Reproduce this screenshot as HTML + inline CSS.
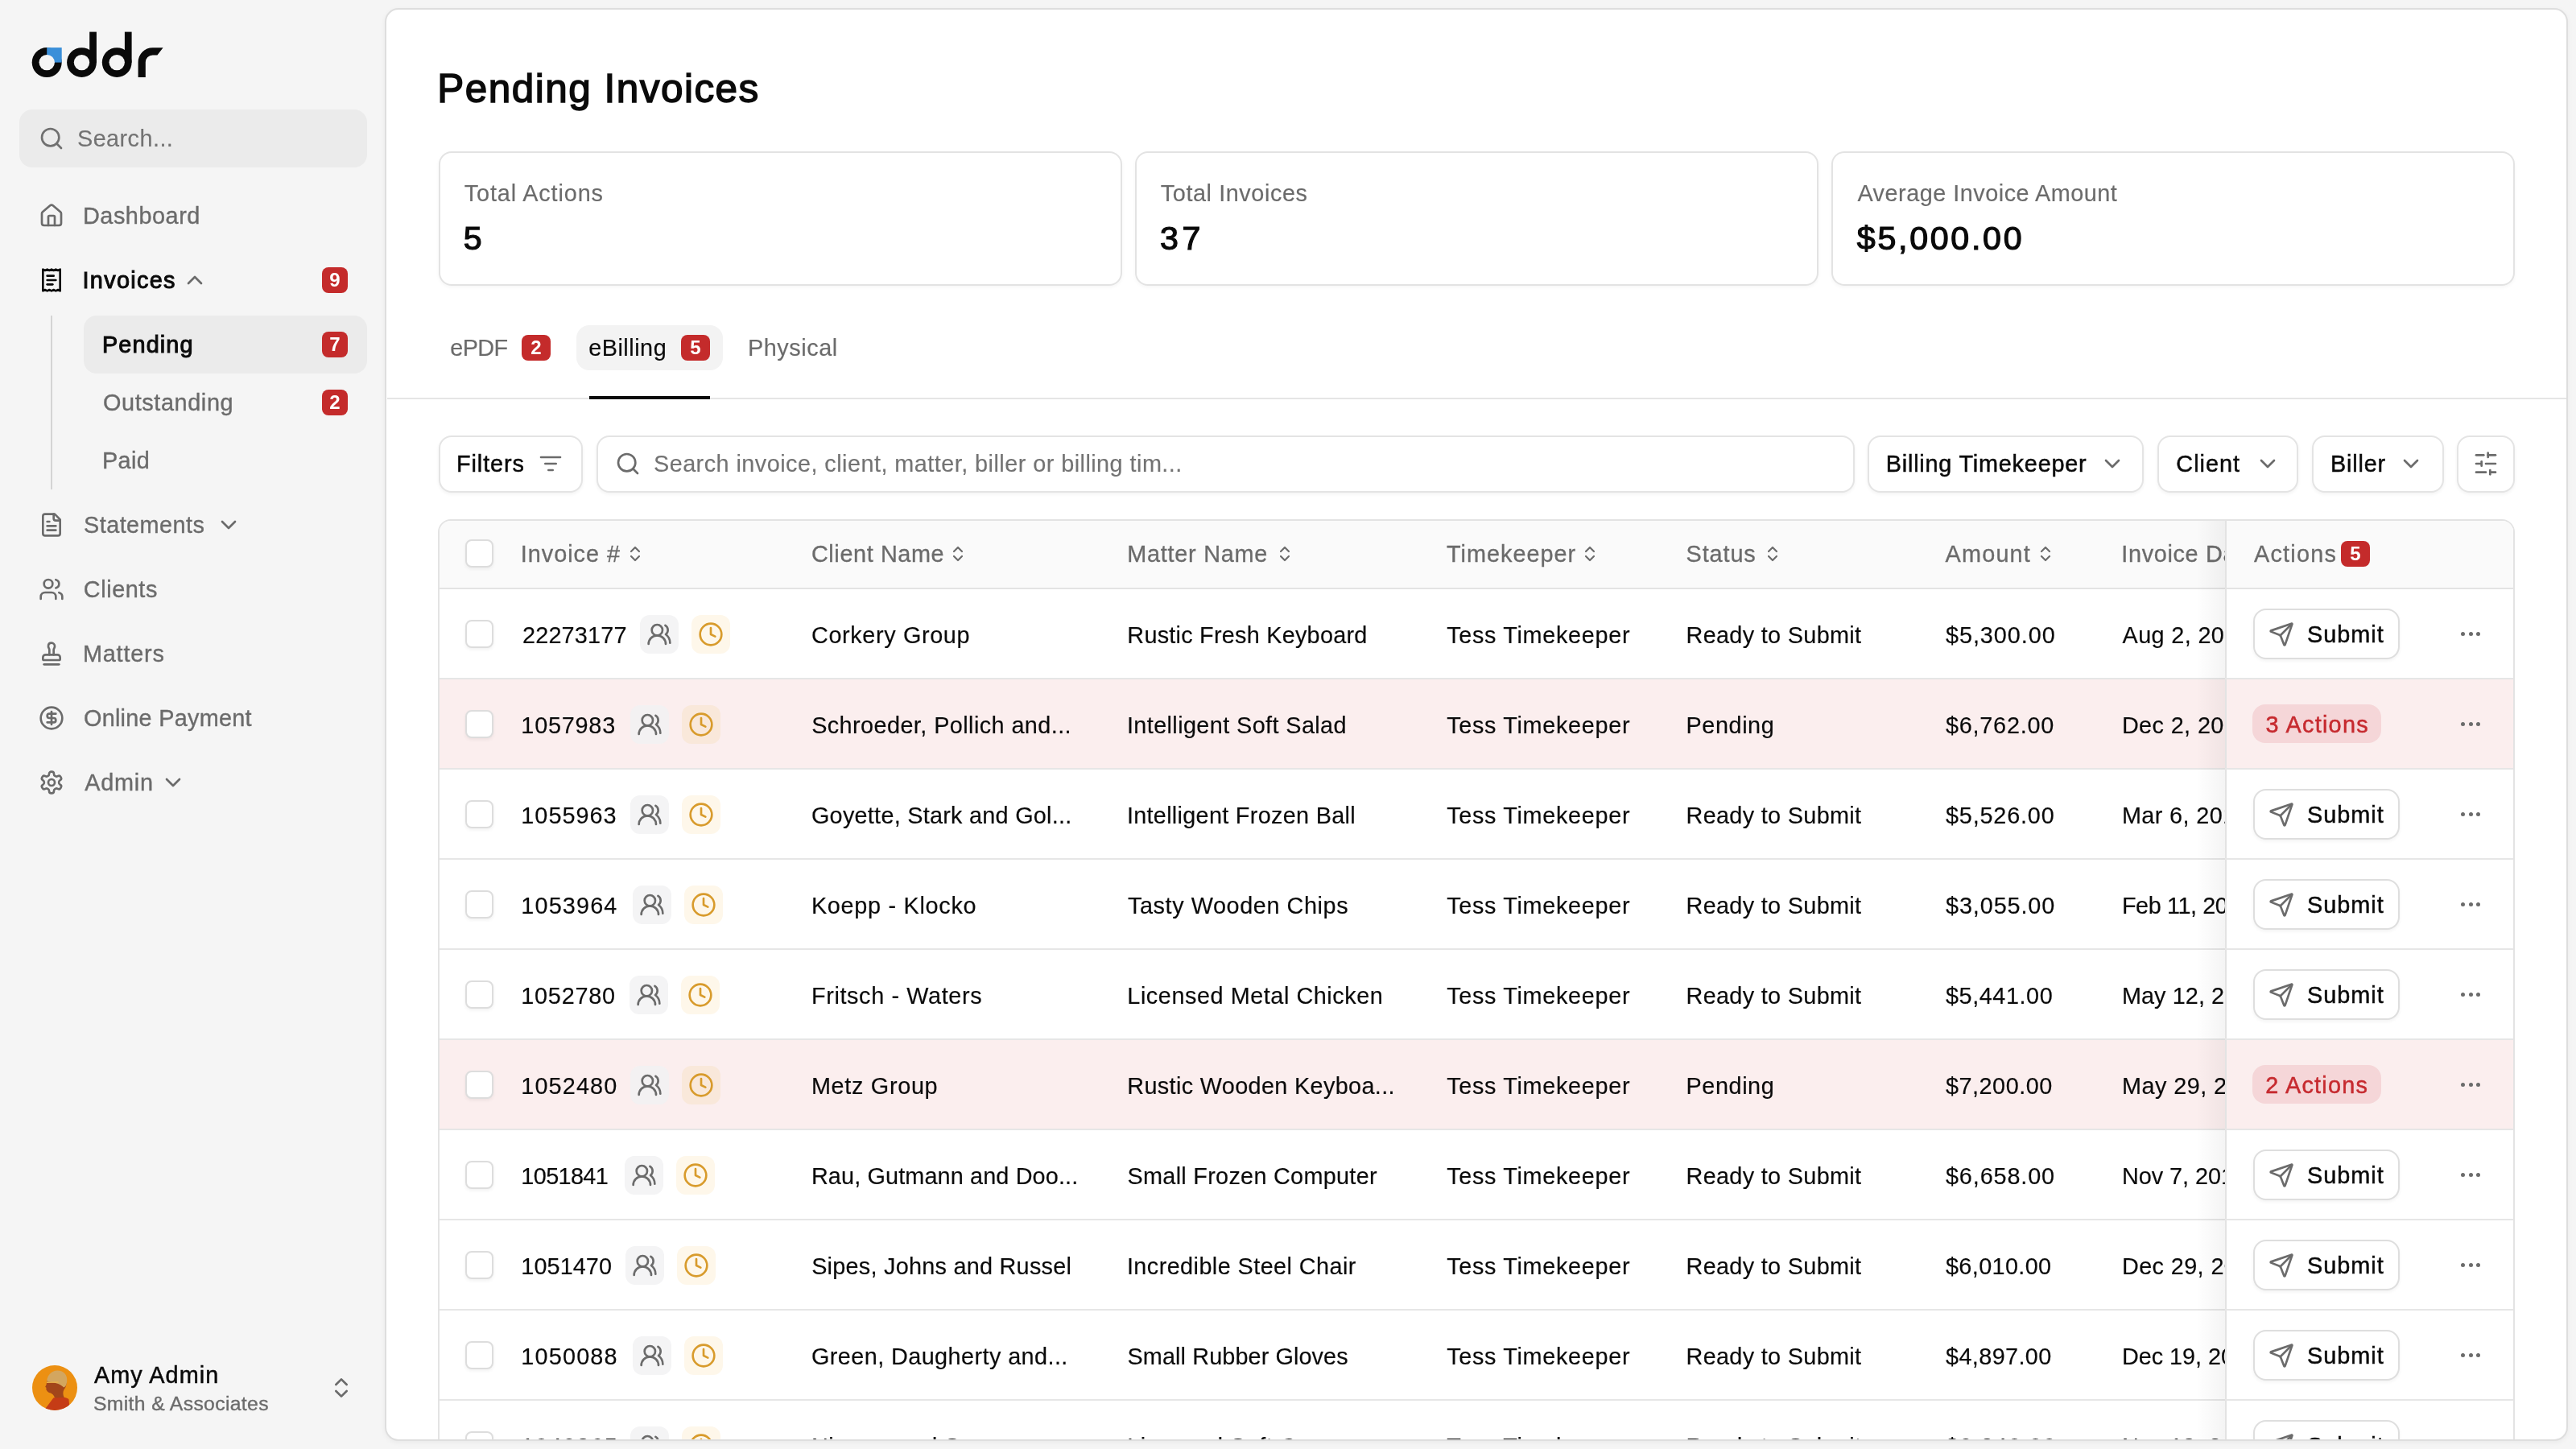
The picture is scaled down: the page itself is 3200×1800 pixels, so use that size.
<!DOCTYPE html>
<html><head><meta charset="utf-8"><title>Pending Invoices</title>
<style>
*{margin:0;padding:0;box-sizing:border-box}
html,body{width:100%;height:100%;overflow:hidden;background:#f5f5f5}
#app{will-change:transform;position:absolute;left:0;top:0;width:1600px;height:900px;zoom:2;font-family:"Liberation Sans",sans-serif;color:#0a0a0a;overflow:hidden;background:#f5f5f5}
.ic{position:absolute;overflow:visible}
.t{position:absolute;white-space:nowrap;line-height:20px;font-size:14px;-webkit-text-stroke:0.08px currentColor}
.gray{color:#6b6b6b}
.gray2{color:#737373}
.red{color:#c62a2f}
.b{position:absolute}
.dark{color:#0a0a0a}
.bold{font-weight:bold}
.t.med{-webkit-text-stroke:0.24px currentColor}
#sb .t.gray{-webkit-text-stroke:0.18px currentColor}
.t.hd.med{-webkit-text-stroke:0.16px currentColor}
.t.bold{-webkit-text-stroke:0}
.t.semi.s14{-webkit-text-stroke:0.5px currentColor}
.t.semi.s20{-webkit-text-stroke:0.62px currentColor}
.t.semi.s24{-webkit-text-stroke:0.75px currentColor}
.bdg{position:absolute;background:#c42b2b;color:#fff;border-radius:4px;text-align:center;font-weight:bold}
#sb{position:absolute;left:0;top:0;width:240px;height:900px}
.sbsearch{position:absolute;left:12px;top:68px;width:216px;height:36px;border-radius:8px;background:#ebebeb}
.nav{position:absolute;height:36px;border-radius:8px}
.nav.act{background:#ebebeb}
.subline{position:absolute;left:31.5px;top:196px;width:1px;height:108px;background:#d4d4d4}
@media (max-width:2400px){#app{zoom:1}}
#main{position:absolute;left:239px;top:5px;width:1356px;height:890px;background:#fff;border:1px solid #dedede;border-radius:8.5px;overflow:hidden;box-shadow:0 1px 3px rgba(0,0,0,0.05)}
</style></head>
<body><div id="app">
<div id="sb">
<svg class="ic" style="left:0;top:0;width:120px;height:60px" viewBox="0 0 120 60">
<circle cx="29.1" cy="38.8" r="9.25" fill="#0a0a0a"/>
<rect x="29.1" y="29.55" width="9.25" height="9.25" fill="#3a8fd9"/>
<circle cx="29.1" cy="38.8" r="4.85" fill="#f5f5f5"/>
<circle cx="50.75" cy="38.8" r="9.2" fill="#0a0a0a"/>
<rect x="55.6" y="19.8" width="4.35" height="19" fill="#0a0a0a"/>
<circle cx="50.75" cy="38.8" r="4.85" fill="#f5f5f5"/>
<circle cx="72.6" cy="38.8" r="9.2" fill="#0a0a0a"/>
<rect x="77.45" y="19.8" width="4.35" height="19" fill="#0a0a0a"/>
<circle cx="72.6" cy="38.8" r="4.85" fill="#f5f5f5"/>
<path d="M85.8,48 V38.6 A9 9 0 0 1 94.8,29.6 H101.3 L97.7,34.2 H94.8 A4.4 4.4 0 0 0 90.4,38.6 V48 Z" fill="#0a0a0a"/>
</svg>
<div class="sbsearch"></div>
<svg class="ic" style="left:24px;top:78px;width:16px;height:16px;" viewBox="0 0 24 24" fill="none" stroke="#707070" stroke-width="2" stroke-linecap="round" stroke-linejoin="round"><circle cx="11" cy="11" r="8"/><path d="m21 21-4.3-4.3"/></svg>
<div class="t gray2" style="left:47.98px;top:76.03px;font-size:14.42px;line-height:20px;letter-spacing:0.222px;">Search...</div>
<div class="nav" style="left:12px;top:116px;width:216px"></div>
<svg class="ic" style="left:24px;top:126px;width:16px;height:16px;" viewBox="0 0 24 24" fill="none" stroke="#6b6b6b" stroke-width="2" stroke-linecap="round" stroke-linejoin="round"><path d="M15 21v-8a1 1 0 0 0-1-1h-4a1 1 0 0 0-1 1v8"/><path d="M3 10a2 2 0 0 1 .709-1.528l7-5.999a2 2 0 0 1 2.582 0l7 5.999A2 2 0 0 1 21 10v9a2 2 0 0 1-2 2H5a2 2 0 0 1-2-2z"/></svg>
<div class="t gray" style="left:51.47px;top:124.23px;font-size:14.42px;line-height:20px;letter-spacing:0.276px;">Dashboard</div>
<div class="nav" style="left:12px;top:156px;width:216px"></div>
<svg class="ic" style="left:24px;top:166px;width:16px;height:16px;" viewBox="0 0 24 24" fill="none" stroke="#0a0a0a" stroke-width="2" stroke-linecap="round" stroke-linejoin="round"><path d="M4 2v20l2-1 2 1 2-1 2 1 2-1 2 1 2-1 2 1V2l-2 1-2-1-2 1-2-1-2 1-2-1-2 1Z"/><path d="M14 8H8"/><path d="M16 12H8"/><path d="M13 16H8"/></svg>
<div class="t semi s14 dark" style="left:51.26px;top:164.23px;font-size:14.42px;line-height:20px;letter-spacing:0.659px;">Invoices</div>
<svg class="ic" style="left:113px;top:166px;width:16px;height:16px;" viewBox="0 0 24 24" fill="none" stroke="#6b6b6b" stroke-width="2" stroke-linecap="round" stroke-linejoin="round"><path d="m18 15-6-6-6 6"/></svg>
<div class="bdg" style="left:200px;top:166px;width:16px;height:16px;font-size:12px;line-height:16px">9</div>
<div class="subline"></div>
<div class="nav act" style="left:52px;top:196px;width:176px"></div>
<div class="t semi s14 dark" style="left:63.47px;top:204.23px;font-size:14.42px;line-height:20px;letter-spacing:0.570px;">Pending</div>
<div class="bdg" style="left:200px;top:206px;width:16px;height:16px;font-size:12px;line-height:16px">7</div>
<div class="nav" style="left:52px;top:232px;width:176px"></div>
<div class="t gray" style="left:63.98px;top:240.23px;font-size:14.42px;line-height:20px;letter-spacing:0.308px;">Outstanding</div>
<div class="bdg" style="left:200px;top:242px;width:16px;height:16px;font-size:12px;line-height:16px">2</div>
<div class="nav" style="left:52px;top:268px;width:176px"></div>
<div class="t gray" style="left:63.47px;top:276.23px;font-size:14.42px;line-height:20px;letter-spacing:0.173px;">Paid</div>
<div class="nav" style="left:12px;top:308px;width:216px"></div>
<svg class="ic" style="left:24px;top:318px;width:16px;height:16px;" viewBox="0 0 24 24" fill="none" stroke="#6b6b6b" stroke-width="2" stroke-linecap="round" stroke-linejoin="round"><path d="M15 2H6a2 2 0 0 0-2 2v16a2 2 0 0 0 2 2h12a2 2 0 0 0 2-2V7Z"/><path d="M14 2v4a2 2 0 0 0 2 2h4"/><path d="M10 9H8"/><path d="M16 13H8"/><path d="M16 17H8"/></svg>
<div class="t gray" style="left:51.98px;top:316.23px;font-size:14.42px;line-height:20px;letter-spacing:0.234px;">Statements</div>
<svg class="ic" style="left:134px;top:318px;width:16px;height:16px;" viewBox="0 0 24 24" fill="none" stroke="#6b6b6b" stroke-width="2" stroke-linecap="round" stroke-linejoin="round"><path d="m6 9 6 6 6-6"/></svg>
<div class="nav" style="left:12px;top:348px;width:216px"></div>
<svg class="ic" style="left:24px;top:358px;width:16px;height:16px;" viewBox="0 0 24 24" fill="none" stroke="#6b6b6b" stroke-width="2" stroke-linecap="round" stroke-linejoin="round"><path d="M16 21v-2a4 4 0 0 0-4-4H6a4 4 0 0 0-4 4v2"/><circle cx="9" cy="7" r="4"/><path d="M22 21v-2a4 4 0 0 0-3-3.87"/><path d="M16 3.13a4 4 0 0 1 0 7.75"/></svg>
<div class="t gray" style="left:51.88px;top:356.23px;font-size:14.42px;line-height:20px;letter-spacing:0.292px;">Clients</div>
<div class="nav" style="left:12px;top:388px;width:216px"></div>
<svg class="ic" style="left:24px;top:398px;width:16px;height:16px;" viewBox="0 0 24 24" fill="none" stroke="#6b6b6b" stroke-width="2" stroke-linecap="round" stroke-linejoin="round"><path d="M5 22h14"/><path d="M19.27 13.73A2.5 2.5 0 0 0 17.5 13h-11A2.5 2.5 0 0 0 4 15.5V17a1 1 0 0 0 1 1h14a1 1 0 0 0 1-1v-1.5c0-.66-.26-1.3-.73-1.77Z"/><path d="M14 13V8.5C14 7 15 7 15 5a3 3 0 0 0-3-3c-1.66 0-3 1-3 3s1 2 1 3.5V13"/></svg>
<div class="t gray" style="left:51.47px;top:396.23px;font-size:14.42px;line-height:20px;letter-spacing:0.408px;">Matters</div>
<div class="nav" style="left:12px;top:428px;width:216px"></div>
<svg class="ic" style="left:24px;top:438px;width:16px;height:16px;" viewBox="0 0 24 24" fill="none" stroke="#6b6b6b" stroke-width="2" stroke-linecap="round" stroke-linejoin="round"><circle cx="12" cy="12" r="10"/><path d="M16 8h-6a2 2 0 1 0 0 4h4a2 2 0 1 1 0 4H8"/><path d="M12 18V6"/></svg>
<div class="t gray" style="left:51.98px;top:436.23px;font-size:14.42px;line-height:20px;letter-spacing:0.133px;">Online Payment</div>
<div class="nav" style="left:12px;top:468px;width:216px"></div>
<svg class="ic" style="left:24px;top:478px;width:16px;height:16px;" viewBox="0 0 24 24" fill="none" stroke="#6b6b6b" stroke-width="2" stroke-linecap="round" stroke-linejoin="round"><path d="M12.22 2h-.44a2 2 0 0 0-2 2v.18a2 2 0 0 1-1 1.73l-.43.25a2 2 0 0 1-2 0l-.15-.08a2 2 0 0 0-2.73.73l-.22.38a2 2 0 0 0 .73 2.73l.15.1a2 2 0 0 1 1 1.72v.51a2 2 0 0 1-1 1.74l-.15.09a2 2 0 0 0-.73 2.73l.22.38a2 2 0 0 0 2.73.73l.15-.08a2 2 0 0 1 2 0l.43.25a2 2 0 0 1 1 1.73V20a2 2 0 0 0 2 2h.44a2 2 0 0 0 2-2v-.18a2 2 0 0 1 1-1.73l.43-.25a2 2 0 0 1 2 0l.15.08a2 2 0 0 0 2.73-.73l.22-.39a2 2 0 0 0-.73-2.73l-.15-.08a2 2 0 0 1-1-1.74v-.5a2 2 0 0 1 1-1.74l.15-.09a2 2 0 0 0 .73-2.73l-.22-.38a2 2 0 0 0-2.73-.73l-.15.08a2 2 0 0 1-2 0l-.43-.25a2 2 0 0 1-1-1.73V4a2 2 0 0 0-2-2z"/><circle cx="12" cy="12" r="3"/></svg>
<div class="t gray" style="left:52.60px;top:476.23px;font-size:14.42px;line-height:20px;letter-spacing:0.384px;">Admin</div>
<svg class="ic" style="left:99.3px;top:478px;width:16px;height:16px;" viewBox="0 0 24 24" fill="none" stroke="#6b6b6b" stroke-width="2" stroke-linecap="round" stroke-linejoin="round"><path d="m6 9 6 6 6-6"/></svg>
<svg class="ic" style="left:20px;top:848px;width:28px;height:28px" viewBox="0 0 28 28">
<defs><clipPath id="avc"><circle cx="14" cy="14" r="14"/></clipPath></defs>
<g clip-path="url(#avc)">
<rect width="28" height="28" fill="#ec9012"/>
<path d="M13.2 20.2 L8.3 26.8 L8.8 28.5 L23.5 28.5 L22.7 21 C21 20 19 19.6 17 19.7 Z" fill="#c53c16"/>
<path d="M10.5 6.5 C9.3 8.5 9 10.5 8.8 12 L8.1 13.4 L8.8 14 L8.6 14.9 C9.2 16.2 10 17 11.5 17.3 C12.5 17.8 13.5 18.6 14 20.2 L19.8 20 C19 18 19 16.5 19.8 15 C21.2 13.5 21.6 11 21 9 C19.5 5 13 4.5 10.5 6.5 Z" fill="#a2461a"/>
<path d="M9.2 10.2 C9 6.5 12 3.4 15.5 3.3 C19.5 3.2 22 6 21.6 10 C21.3 12.5 20.5 13.5 19.6 13.8 C17 11 13 10.5 9.2 10.2 Z" fill="#d3a65f"/>
<path d="M9 10.7 L16.3 10.5" stroke="#eab24c" stroke-width="0.7"/>
</g></svg>
<div class="t dark med" style="left:58.50px;top:844.23px;font-size:14.42px;line-height:20px;letter-spacing:0.525px;">Amy Admin</div>
<div class="t gray" style="left:57.97px;top:861.82px;font-size:12.36px;line-height:20px;letter-spacing:0.178px;">Smith &amp; Associates</div>
<svg class="ic" style="left:204px;top:854px;width:16px;height:16px;" viewBox="0 0 24 24" fill="none" stroke="#6b6b6b" stroke-width="2" stroke-linecap="round" stroke-linejoin="round"><path d="m7 15 5 5 5-5"/><path d="m7 9 5-5 5 5"/></svg>
</div>
<div id="main">
<div class="t semi s24 dark" style="left:31.66px;top:32.93px;font-size:24.72px;line-height:32px;letter-spacing:0.749px;">Pending Invoices</div>
<div class="b" style="left:32.5px;top:88.1px;width:424.5px;height:83.5px;border:1px solid #e3e3e3;border-radius:8px;box-shadow:0 1px 2px rgba(0,0,0,0.04)"></div>
<div class="t gray" style="left:48.39px;top:104.23px;font-size:14.42px;line-height:20px;letter-spacing:0.430px;">Total Actions</div>
<div class="t semi s20 dark" style="left:47.82px;top:128.19px;font-size:20.60px;line-height:28px;letter-spacing:1.717px;">5</div>
<div class="b" style="left:465px;top:88.1px;width:424.5px;height:83.5px;border:1px solid #e3e3e3;border-radius:8px;box-shadow:0 1px 2px rgba(0,0,0,0.04)"></div>
<div class="t gray" style="left:480.89px;top:104.23px;font-size:14.42px;line-height:20px;letter-spacing:0.291px;">Total Invoices</div>
<div class="t semi s20 dark" style="left:480.46px;top:128.19px;font-size:20.60px;line-height:28px;letter-spacing:2.383px;">37</div>
<div class="b" style="left:897.5px;top:88.1px;width:424.5px;height:83.5px;border:1px solid #e3e3e3;border-radius:8px;box-shadow:0 1px 2px rgba(0,0,0,0.04)"></div>
<div class="t gray" style="left:913.7px;top:104.23px;font-size:14.42px;line-height:20px;letter-spacing:0.250px;">Average Invoice Amount</div>
<div class="t semi s20 dark" style="left:913.41px;top:128.19px;font-size:20.60px;line-height:28px;letter-spacing:1.349px;">$5,000.00</div>
<div class="b" style="left:0.5px;top:241px;width:1354px;height:1px;background:#e5e5e5"></div>
<div class="b" style="left:118px;top:196px;width:91px;height:28px;background:#f3f3f3;border-radius:8px"></div>
<div class="t gray" style="left:39.68px;top:200.23px;font-size:14.42px;line-height:20px;letter-spacing:-0.313px;">ePDF</div>
<div class="bdg" style="left:84px;top:202px;width:18px;height:16px;font-size:12px;line-height:16px">2</div>
<div class="t dark" style="left:125.58px;top:200.23px;font-size:14.42px;line-height:20px;letter-spacing:0.256px;">eBilling</div>
<div class="bdg" style="left:183px;top:202px;width:18px;height:16px;font-size:12px;line-height:16px">5</div>
<div class="t gray" style="left:224.47px;top:200.23px;font-size:14.42px;line-height:20px;letter-spacing:0.285px;">Physical</div>
<div class="b" style="left:126px;top:240px;width:75px;height:2px;background:#0a0a0a"></div>
<div class="b" style="left:32.5px;top:264.3px;width:89.5px;height:35.5px;border:1px solid #e4e4e4;border-radius:8px;box-shadow:0 1px 2px rgba(0,0,0,0.05);background:#fff"></div>
<div class="t dark med" style="left:43.47px;top:272.23px;font-size:14.42px;line-height:20px;letter-spacing:0.467px;">Filters</div>
<svg class="ic" style="left:94px;top:274px;width:16px;height:16px;" viewBox="0 0 24 24" fill="none" stroke="#6b6b6b" stroke-width="2" stroke-linecap="round" stroke-linejoin="round"><path d="M3 6h18"/><path d="M7 12h10"/><path d="M10 18h4"/></svg>
<div class="b" style="left:130.5px;top:264.3px;width:781.5px;height:35.5px;border:1px solid #e4e4e4;border-radius:8px;box-shadow:0 1px 2px rgba(0,0,0,0.05);background:#fff"></div>
<svg class="ic" style="left:142px;top:274px;width:16px;height:16px;" viewBox="0 0 24 24" fill="none" stroke="#6b6b6b" stroke-width="2" stroke-linecap="round" stroke-linejoin="round"><circle cx="11" cy="11" r="8"/><path d="m21 21-4.3-4.3"/></svg>
<div class="t gray2" style="left:165.98px;top:272.23px;font-size:14.42px;line-height:20px;letter-spacing:0.228px;">Search invoice, client, matter, biller or billing tim...</div>
<div class="b" style="left:920.2px;top:264.3px;width:171.5px;height:35.5px;border:1px solid #e4e4e4;border-radius:8px;box-shadow:0 1px 2px rgba(0,0,0,0.05);background:#fff"></div>
<div class="t dark med" style="left:931.37px;top:272.23px;font-size:14.42px;line-height:20px;letter-spacing:0.395px;">Billing Timekeeper</div>
<svg class="ic" style="left:1064px;top:274px;width:16px;height:16px;" viewBox="0 0 24 24" fill="none" stroke="#6b6b6b" stroke-width="2" stroke-linecap="round" stroke-linejoin="round"><path d="m6 9 6 6 6-6"/></svg>
<div class="b" style="left:1100.2px;top:264.3px;width:87.5px;height:35.5px;border:1px solid #e4e4e4;border-radius:8px;box-shadow:0 1px 2px rgba(0,0,0,0.05);background:#fff"></div>
<div class="t dark med" style="left:1111.68px;top:272.23px;font-size:14.42px;line-height:20px;letter-spacing:0.490px;">Client</div>
<svg class="ic" style="left:1160.4px;top:274px;width:16px;height:16px;" viewBox="0 0 24 24" fill="none" stroke="#6b6b6b" stroke-width="2" stroke-linecap="round" stroke-linejoin="round"><path d="m6 9 6 6 6-6"/></svg>
<div class="b" style="left:1196.2px;top:264.3px;width:81.8px;height:35.5px;border:1px solid #e4e4e4;border-radius:8px;box-shadow:0 1px 2px rgba(0,0,0,0.05);background:#fff"></div>
<div class="t dark med" style="left:1207.47px;top:272.23px;font-size:14.42px;line-height:20px;letter-spacing:0.421px;">Biller</div>
<svg class="ic" style="left:1249.7px;top:274px;width:16px;height:16px;" viewBox="0 0 24 24" fill="none" stroke="#6b6b6b" stroke-width="2" stroke-linecap="round" stroke-linejoin="round"><path d="m6 9 6 6 6-6"/></svg>
<div class="b" style="left:1286.2px;top:264.3px;width:35.8px;height:35.5px;border:1px solid #e4e4e4;border-radius:8px;box-shadow:0 1px 2px rgba(0,0,0,0.05);background:#fff"></div>
<svg class="ic" style="left:1296px;top:274px;width:16px;height:16px;" viewBox="0 0 24 24" fill="none" stroke="#6b6b6b" stroke-width="2" stroke-linecap="round" stroke-linejoin="round"><line x1="21" x2="14" y1="4" y2="4"/><line x1="10" x2="3" y1="4" y2="4"/><line x1="21" x2="12" y1="12" y2="12"/><line x1="8" x2="3" y1="12" y2="12"/><line x1="21" x2="16" y1="20" y2="20"/><line x1="12" x2="3" y1="20" y2="20"/><line x1="14" x2="14" y1="2" y2="6"/><line x1="8" x2="8" y1="10" y2="14"/><line x1="16" x2="16" y1="18" y2="22"/></svg>
<div class="b" style="left:32.2px;top:316.5px;width:1289.8px;height:900px;border:1px solid #e3e3e3;border-radius:8px;background:#fff;overflow:hidden">
<div class="b" style="left:0px;top:0px;width:1287.8px;height:42px;background:#fafafa"></div>
<div class="b" style="left:0px;top:41.5px;width:1287.8px;height:1px;background:#e3e3e3"></div>
<div class="b" style="left:15.9px;top:11.5px;width:17.6px;height:17.6px;border:1px solid #dddddd;border-radius:4px;background:#fff;box-shadow:0 1px 2px rgba(0,0,0,0.06)"></div>
<div class="t gray hd med" style="left:50.16px;top:10.73px;font-size:14.42px;line-height:20px;letter-spacing:0.495px;">Invoice #</div>
<svg class="ic" style="left:115.5px;top:14.5px;width:12px;height:12px;" viewBox="0 0 24 24" fill="none" stroke="#6b6b6b" stroke-width="2.2" stroke-linecap="round" stroke-linejoin="round"><path d="m7 15 5 5 5-5"/><path d="m7 9 5-5 5 5"/></svg>
<div class="t gray hd med" style="left:230.78px;top:10.73px;font-size:14.42px;line-height:20px;letter-spacing:0.303px;">Client Name</div>
<svg class="ic" style="left:315.8px;top:14.5px;width:12px;height:12px;" viewBox="0 0 24 24" fill="none" stroke="#6b6b6b" stroke-width="2.2" stroke-linecap="round" stroke-linejoin="round"><path d="m7 15 5 5 5-5"/><path d="m7 9 5-5 5 5"/></svg>
<div class="t gray hd med" style="left:426.87px;top:10.73px;font-size:14.42px;line-height:20px;letter-spacing:0.382px;">Matter Name</div>
<svg class="ic" style="left:518.8px;top:14.5px;width:12px;height:12px;" viewBox="0 0 24 24" fill="none" stroke="#6b6b6b" stroke-width="2.2" stroke-linecap="round" stroke-linejoin="round"><path d="m7 15 5 5 5-5"/><path d="m7 9 5-5 5 5"/></svg>
<div class="t gray hd med" style="left:625.29px;top:10.73px;font-size:14.42px;line-height:20px;letter-spacing:0.502px;">Timekeeper</div>
<svg class="ic" style="left:708.2px;top:14.5px;width:12px;height:12px;" viewBox="0 0 24 24" fill="none" stroke="#6b6b6b" stroke-width="2.2" stroke-linecap="round" stroke-linejoin="round"><path d="m7 15 5 5 5-5"/><path d="m7 9 5-5 5 5"/></svg>
<div class="t gray hd med" style="left:774.08px;top:10.73px;font-size:14.42px;line-height:20px;letter-spacing:0.448px;">Status</div>
<svg class="ic" style="left:821.8px;top:14.5px;width:12px;height:12px;" viewBox="0 0 24 24" fill="none" stroke="#6b6b6b" stroke-width="2.2" stroke-linecap="round" stroke-linejoin="round"><path d="m7 15 5 5 5-5"/><path d="m7 9 5-5 5 5"/></svg>
<div class="t gray hd med" style="left:935.1px;top:10.73px;font-size:14.42px;line-height:20px;letter-spacing:0.591px;">Amount</div>
<svg class="ic" style="left:991.1px;top:14.5px;width:12px;height:12px;" viewBox="0 0 24 24" fill="none" stroke="#6b6b6b" stroke-width="2.2" stroke-linecap="round" stroke-linejoin="round"><path d="m7 15 5 5 5-5"/><path d="m7 9 5-5 5 5"/></svg>
<div class="t gray hd med" style="left:1044.46px;top:10.73px;font-size:14.42px;line-height:20px;letter-spacing:0.329px;">Invoice Date</div>
<div class="b" style="left:0px;top:97.5px;width:1287.8px;height:1px;background:#e6e6e6"></div>
<div class="b" style="left:15.9px;top:61.45px;width:17.6px;height:17.6px;border:1px solid #dddddd;border-radius:4px;background:#fff;box-shadow:0 1px 2px rgba(0,0,0,0.06)"></div>
<div class="t dark" style="left:51.28px;top:60.93px;font-size:14.42px;line-height:20px;letter-spacing:0.096px;">22273177</div>
<div class="b" style="left:124.4px;top:58.4px;width:24px;height:24px;background:#f4f4f5;border-radius:6px"></div>
<svg class="ic" style="left:128.4px;top:62.4px;width:16px;height:16px;" viewBox="0 0 24 24" fill="none" stroke="#6b6b6b" stroke-width="2" stroke-linecap="round" stroke-linejoin="round"><path d="M18 21a8 8 0 0 0-16 0"/><circle cx="10" cy="8" r="5"/><path d="M22 20c0-3.37-2-6.5-4-8a5 5 0 0 0-.45-8.3"/></svg>
<div class="b" style="left:156.4px;top:58.4px;width:24px;height:24px;background:#fef7ea;border-radius:6px"></div>
<svg class="ic" style="left:160.4px;top:62.4px;width:16px;height:16px;" viewBox="0 0 24 24" fill="none" stroke="#d89b2c" stroke-width="2" stroke-linecap="round" stroke-linejoin="round"><circle cx="12" cy="12" r="10"/><path d="M12 6v6l4 2"/></svg>
<div class="t dark" style="left:230.78px;top:60.93px;font-size:14.42px;line-height:20px;letter-spacing:0.315px;">Corkery Group</div>
<div class="t dark" style="left:426.97px;top:60.93px;font-size:14.42px;line-height:20px;letter-spacing:0.119px;">Rustic Fresh Keyboard</div>
<div class="t dark" style="left:625.39px;top:60.93px;font-size:14.42px;line-height:20px;letter-spacing:0.339px;">Tess Timekeeper</div>
<div class="t dark" style="left:774.07px;top:60.93px;font-size:14.42px;line-height:20px;letter-spacing:0.159px;">Ready to Submit</div>
<div class="t dark" style="left:935.29px;top:60.93px;font-size:14.42px;line-height:20px;letter-spacing:0.469px;">$5,300.00</div>
<div class="t dark" style="left:1045.1px;top:60.93px;font-size:14.42px;line-height:20px;letter-spacing:0.176px;">Aug 2, 2019</div>
<div class="b" style="left:0px;top:98.5px;width:1287.8px;height:55px;background:#fbeeee"></div>
<div class="b" style="left:0px;top:153.5px;width:1287.8px;height:1px;background:#e6e6e6"></div>
<div class="b" style="left:15.9px;top:117.45px;width:17.6px;height:17.6px;border:1px solid #dddddd;border-radius:4px;background:#fff;box-shadow:0 1px 2px rgba(0,0,0,0.06)"></div>
<div class="t dark" style="left:50.47px;top:116.93px;font-size:14.42px;line-height:20px;letter-spacing:0.386px;">1057983</div>
<div class="b" style="left:118.5px;top:114.4px;width:24px;height:24px;background:#f3f1f2;border-radius:6px"></div>
<svg class="ic" style="left:122.5px;top:118.4px;width:16px;height:16px;" viewBox="0 0 24 24" fill="none" stroke="#6b6b6b" stroke-width="2" stroke-linecap="round" stroke-linejoin="round"><path d="M18 21a8 8 0 0 0-16 0"/><circle cx="10" cy="8" r="5"/><path d="M22 20c0-3.37-2-6.5-4-8a5 5 0 0 0-.45-8.3"/></svg>
<div class="b" style="left:150.5px;top:114.4px;width:24px;height:24px;background:#f9e8da;border-radius:6px"></div>
<svg class="ic" style="left:154.5px;top:118.4px;width:16px;height:16px;" viewBox="0 0 24 24" fill="none" stroke="#d89b2c" stroke-width="2" stroke-linecap="round" stroke-linejoin="round"><circle cx="12" cy="12" r="10"/><path d="M12 6v6l4 2"/></svg>
<div class="t dark" style="left:230.88px;top:116.93px;font-size:14.42px;line-height:20px;letter-spacing:0.208px;">Schroeder, Pollich and...</div>
<div class="t dark" style="left:426.76px;top:116.93px;font-size:14.42px;line-height:20px;letter-spacing:0.196px;">Intelligent Soft Salad</div>
<div class="t dark" style="left:625.39px;top:116.93px;font-size:14.42px;line-height:20px;letter-spacing:0.339px;">Tess Timekeeper</div>
<div class="t dark" style="left:774.07px;top:116.93px;font-size:14.42px;line-height:20px;letter-spacing:0.286px;">Pending</div>
<div class="t dark" style="left:935.29px;top:116.93px;font-size:14.42px;line-height:20px;letter-spacing:0.381px;">$6,762.00</div>
<div class="t dark" style="left:1044.77px;top:116.93px;font-size:14.42px;line-height:20px;letter-spacing:0.189px;">Dec 2, 2019</div>
<div class="b" style="left:0px;top:209.5px;width:1287.8px;height:1px;background:#e6e6e6"></div>
<div class="b" style="left:15.9px;top:173.45px;width:17.6px;height:17.6px;border:1px solid #dddddd;border-radius:4px;background:#fff;box-shadow:0 1px 2px rgba(0,0,0,0.06)"></div>
<div class="t dark" style="left:50.47px;top:172.93px;font-size:14.42px;line-height:20px;letter-spacing:0.503px;">1055963</div>
<div class="b" style="left:118.5px;top:170.4px;width:24px;height:24px;background:#f4f4f5;border-radius:6px"></div>
<svg class="ic" style="left:122.5px;top:174.4px;width:16px;height:16px;" viewBox="0 0 24 24" fill="none" stroke="#6b6b6b" stroke-width="2" stroke-linecap="round" stroke-linejoin="round"><path d="M18 21a8 8 0 0 0-16 0"/><circle cx="10" cy="8" r="5"/><path d="M22 20c0-3.37-2-6.5-4-8a5 5 0 0 0-.45-8.3"/></svg>
<div class="b" style="left:150.5px;top:170.4px;width:24px;height:24px;background:#fef7ea;border-radius:6px"></div>
<svg class="ic" style="left:154.5px;top:174.4px;width:16px;height:16px;" viewBox="0 0 24 24" fill="none" stroke="#d89b2c" stroke-width="2" stroke-linecap="round" stroke-linejoin="round"><circle cx="12" cy="12" r="10"/><path d="M12 6v6l4 2"/></svg>
<div class="t dark" style="left:230.78px;top:172.93px;font-size:14.42px;line-height:20px;letter-spacing:0.127px;">Goyette, Stark and Gol...</div>
<div class="t dark" style="left:426.76px;top:172.93px;font-size:14.42px;line-height:20px;letter-spacing:0.147px;">Intelligent Frozen Ball</div>
<div class="t dark" style="left:625.39px;top:172.93px;font-size:14.42px;line-height:20px;letter-spacing:0.339px;">Tess Timekeeper</div>
<div class="t dark" style="left:774.07px;top:172.93px;font-size:14.42px;line-height:20px;letter-spacing:0.159px;">Ready to Submit</div>
<div class="t dark" style="left:935.29px;top:172.93px;font-size:14.42px;line-height:20px;letter-spacing:0.406px;">$5,526.00</div>
<div class="t dark" style="left:1044.77px;top:172.93px;font-size:14.42px;line-height:20px;letter-spacing:0.191px;">Mar 6, 2019</div>
<div class="b" style="left:0px;top:265.5px;width:1287.8px;height:1px;background:#e6e6e6"></div>
<div class="b" style="left:15.9px;top:229.45px;width:17.6px;height:17.6px;border:1px solid #dddddd;border-radius:4px;background:#fff;box-shadow:0 1px 2px rgba(0,0,0,0.06)"></div>
<div class="t dark" style="left:50.47px;top:228.93px;font-size:14.42px;line-height:20px;letter-spacing:0.568px;">1053964</div>
<div class="b" style="left:119.8px;top:226.4px;width:24px;height:24px;background:#f4f4f5;border-radius:6px"></div>
<svg class="ic" style="left:123.8px;top:230.4px;width:16px;height:16px;" viewBox="0 0 24 24" fill="none" stroke="#6b6b6b" stroke-width="2" stroke-linecap="round" stroke-linejoin="round"><path d="M18 21a8 8 0 0 0-16 0"/><circle cx="10" cy="8" r="5"/><path d="M22 20c0-3.37-2-6.5-4-8a5 5 0 0 0-.45-8.3"/></svg>
<div class="b" style="left:151.8px;top:226.4px;width:24px;height:24px;background:#fef7ea;border-radius:6px"></div>
<svg class="ic" style="left:155.8px;top:230.4px;width:16px;height:16px;" viewBox="0 0 24 24" fill="none" stroke="#d89b2c" stroke-width="2" stroke-linecap="round" stroke-linejoin="round"><circle cx="12" cy="12" r="10"/><path d="M12 6v6l4 2"/></svg>
<div class="t dark" style="left:230.77px;top:228.93px;font-size:14.42px;line-height:20px;letter-spacing:0.354px;">Koepp - Klocko</div>
<div class="t dark" style="left:427.29px;top:228.93px;font-size:14.42px;line-height:20px;letter-spacing:0.287px;">Tasty Wooden Chips</div>
<div class="t dark" style="left:625.39px;top:228.93px;font-size:14.42px;line-height:20px;letter-spacing:0.339px;">Tess Timekeeper</div>
<div class="t dark" style="left:774.07px;top:228.93px;font-size:14.42px;line-height:20px;letter-spacing:0.159px;">Ready to Submit</div>
<div class="t dark" style="left:935.29px;top:228.93px;font-size:14.42px;line-height:20px;letter-spacing:0.444px;">$3,055.00</div>
<div class="t dark" style="left:1044.77px;top:228.93px;font-size:14.42px;line-height:20px;letter-spacing:-0.208px;">Feb 11, 2019</div>
<div class="b" style="left:0px;top:321.5px;width:1287.8px;height:1px;background:#e6e6e6"></div>
<div class="b" style="left:15.9px;top:285.45px;width:17.6px;height:17.6px;border:1px solid #dddddd;border-radius:4px;background:#fff;box-shadow:0 1px 2px rgba(0,0,0,0.06)"></div>
<div class="t dark" style="left:50.47px;top:284.93px;font-size:14.42px;line-height:20px;letter-spacing:0.369px;">1052780</div>
<div class="b" style="left:117.9px;top:282.4px;width:24px;height:24px;background:#f4f4f5;border-radius:6px"></div>
<svg class="ic" style="left:121.9px;top:286.4px;width:16px;height:16px;" viewBox="0 0 24 24" fill="none" stroke="#6b6b6b" stroke-width="2" stroke-linecap="round" stroke-linejoin="round"><path d="M18 21a8 8 0 0 0-16 0"/><circle cx="10" cy="8" r="5"/><path d="M22 20c0-3.37-2-6.5-4-8a5 5 0 0 0-.45-8.3"/></svg>
<div class="b" style="left:149.9px;top:282.4px;width:24px;height:24px;background:#fef7ea;border-radius:6px"></div>
<svg class="ic" style="left:153.9px;top:286.4px;width:16px;height:16px;" viewBox="0 0 24 24" fill="none" stroke="#d89b2c" stroke-width="2" stroke-linecap="round" stroke-linejoin="round"><circle cx="12" cy="12" r="10"/><path d="M12 6v6l4 2"/></svg>
<div class="t dark" style="left:230.77px;top:284.93px;font-size:14.42px;line-height:20px;letter-spacing:0.313px;">Fritsch - Waters</div>
<div class="t dark" style="left:426.97px;top:284.93px;font-size:14.42px;line-height:20px;letter-spacing:0.272px;">Licensed Metal Chicken</div>
<div class="t dark" style="left:625.39px;top:284.93px;font-size:14.42px;line-height:20px;letter-spacing:0.339px;">Tess Timekeeper</div>
<div class="t dark" style="left:774.07px;top:284.93px;font-size:14.42px;line-height:20px;letter-spacing:0.159px;">Ready to Submit</div>
<div class="t dark" style="left:935.29px;top:284.93px;font-size:14.42px;line-height:20px;letter-spacing:0.281px;">$5,441.00</div>
<div class="t dark" style="left:1044.77px;top:284.93px;font-size:14.42px;line-height:20px;letter-spacing:0.037px;">May 12, 2019</div>
<div class="b" style="left:0px;top:322.5px;width:1287.8px;height:55px;background:#fbeeee"></div>
<div class="b" style="left:0px;top:377.5px;width:1287.8px;height:1px;background:#e6e6e6"></div>
<div class="b" style="left:15.9px;top:341.45px;width:17.6px;height:17.6px;border:1px solid #dddddd;border-radius:4px;background:#fff;box-shadow:0 1px 2px rgba(0,0,0,0.06)"></div>
<div class="t dark" style="left:50.47px;top:340.93px;font-size:14.42px;line-height:20px;letter-spacing:0.552px;">1052480</div>
<div class="b" style="left:118.5px;top:338.4px;width:24px;height:24px;background:#f3f1f2;border-radius:6px"></div>
<svg class="ic" style="left:122.5px;top:342.4px;width:16px;height:16px;" viewBox="0 0 24 24" fill="none" stroke="#6b6b6b" stroke-width="2" stroke-linecap="round" stroke-linejoin="round"><path d="M18 21a8 8 0 0 0-16 0"/><circle cx="10" cy="8" r="5"/><path d="M22 20c0-3.37-2-6.5-4-8a5 5 0 0 0-.45-8.3"/></svg>
<div class="b" style="left:150.5px;top:338.4px;width:24px;height:24px;background:#f9e8da;border-radius:6px"></div>
<svg class="ic" style="left:154.5px;top:342.4px;width:16px;height:16px;" viewBox="0 0 24 24" fill="none" stroke="#d89b2c" stroke-width="2" stroke-linecap="round" stroke-linejoin="round"><circle cx="12" cy="12" r="10"/><path d="M12 6v6l4 2"/></svg>
<div class="t dark" style="left:230.77px;top:340.93px;font-size:14.42px;line-height:20px;letter-spacing:0.339px;">Metz Group</div>
<div class="t dark" style="left:426.97px;top:340.93px;font-size:14.42px;line-height:20px;letter-spacing:0.170px;">Rustic Wooden Keyboa...</div>
<div class="t dark" style="left:625.39px;top:340.93px;font-size:14.42px;line-height:20px;letter-spacing:0.339px;">Tess Timekeeper</div>
<div class="t dark" style="left:774.07px;top:340.93px;font-size:14.42px;line-height:20px;letter-spacing:0.286px;">Pending</div>
<div class="t dark" style="left:935.29px;top:340.93px;font-size:14.42px;line-height:20px;letter-spacing:0.256px;">$7,200.00</div>
<div class="t dark" style="left:1044.77px;top:340.93px;font-size:14.42px;line-height:20px;letter-spacing:0.228px;">May 29, 2019</div>
<div class="b" style="left:0px;top:433.5px;width:1287.8px;height:1px;background:#e6e6e6"></div>
<div class="b" style="left:15.9px;top:397.45px;width:17.6px;height:17.6px;border:1px solid #dddddd;border-radius:4px;background:#fff;box-shadow:0 1px 2px rgba(0,0,0,0.06)"></div>
<div class="t dark" style="left:50.47px;top:396.93px;font-size:14.42px;line-height:20px;letter-spacing:-0.314px;">1051841</div>
<div class="b" style="left:114.8px;top:394.4px;width:24px;height:24px;background:#f4f4f5;border-radius:6px"></div>
<svg class="ic" style="left:118.8px;top:398.4px;width:16px;height:16px;" viewBox="0 0 24 24" fill="none" stroke="#6b6b6b" stroke-width="2" stroke-linecap="round" stroke-linejoin="round"><path d="M18 21a8 8 0 0 0-16 0"/><circle cx="10" cy="8" r="5"/><path d="M22 20c0-3.37-2-6.5-4-8a5 5 0 0 0-.45-8.3"/></svg>
<div class="b" style="left:146.8px;top:394.4px;width:24px;height:24px;background:#fef7ea;border-radius:6px"></div>
<svg class="ic" style="left:150.8px;top:398.4px;width:16px;height:16px;" viewBox="0 0 24 24" fill="none" stroke="#d89b2c" stroke-width="2" stroke-linecap="round" stroke-linejoin="round"><circle cx="12" cy="12" r="10"/><path d="M12 6v6l4 2"/></svg>
<div class="t dark" style="left:230.77px;top:396.93px;font-size:14.42px;line-height:20px;letter-spacing:0.063px;">Rau, Gutmann and Doo...</div>
<div class="t dark" style="left:427.08px;top:396.93px;font-size:14.42px;line-height:20px;letter-spacing:0.140px;">Small Frozen Computer</div>
<div class="t dark" style="left:625.39px;top:396.93px;font-size:14.42px;line-height:20px;letter-spacing:0.339px;">Tess Timekeeper</div>
<div class="t dark" style="left:774.07px;top:396.93px;font-size:14.42px;line-height:20px;letter-spacing:0.159px;">Ready to Submit</div>
<div class="t dark" style="left:935.29px;top:396.93px;font-size:14.42px;line-height:20px;letter-spacing:0.431px;">$6,658.00</div>
<div class="t dark" style="left:1044.77px;top:396.93px;font-size:14.42px;line-height:20px;letter-spacing:-0.021px;">Nov 7, 2019</div>
<div class="b" style="left:0px;top:489.5px;width:1287.8px;height:1px;background:#e6e6e6"></div>
<div class="b" style="left:15.9px;top:453.45px;width:17.6px;height:17.6px;border:1px solid #dddddd;border-radius:4px;background:#fff;box-shadow:0 1px 2px rgba(0,0,0,0.06)"></div>
<div class="t dark" style="left:50.47px;top:452.93px;font-size:14.42px;line-height:20px;letter-spacing:0.036px;">1051470</div>
<div class="b" style="left:115.4px;top:450.4px;width:24px;height:24px;background:#f4f4f5;border-radius:6px"></div>
<svg class="ic" style="left:119.4px;top:454.4px;width:16px;height:16px;" viewBox="0 0 24 24" fill="none" stroke="#6b6b6b" stroke-width="2" stroke-linecap="round" stroke-linejoin="round"><path d="M18 21a8 8 0 0 0-16 0"/><circle cx="10" cy="8" r="5"/><path d="M22 20c0-3.37-2-6.5-4-8a5 5 0 0 0-.45-8.3"/></svg>
<div class="b" style="left:147.4px;top:450.4px;width:24px;height:24px;background:#fef7ea;border-radius:6px"></div>
<svg class="ic" style="left:151.4px;top:454.4px;width:16px;height:16px;" viewBox="0 0 24 24" fill="none" stroke="#d89b2c" stroke-width="2" stroke-linecap="round" stroke-linejoin="round"><circle cx="12" cy="12" r="10"/><path d="M12 6v6l4 2"/></svg>
<div class="t dark" style="left:230.88px;top:452.93px;font-size:14.42px;line-height:20px;letter-spacing:0.124px;">Sipes, Johns and Russel</div>
<div class="t dark" style="left:426.76px;top:452.93px;font-size:14.42px;line-height:20px;letter-spacing:0.211px;">Incredible Steel Chair</div>
<div class="t dark" style="left:625.39px;top:452.93px;font-size:14.42px;line-height:20px;letter-spacing:0.339px;">Tess Timekeeper</div>
<div class="t dark" style="left:774.07px;top:452.93px;font-size:14.42px;line-height:20px;letter-spacing:0.159px;">Ready to Submit</div>
<div class="t dark" style="left:935.29px;top:452.93px;font-size:14.42px;line-height:20px;letter-spacing:0.181px;">$6,010.00</div>
<div class="t dark" style="left:1044.77px;top:452.93px;font-size:14.42px;line-height:20px;letter-spacing:0.196px;">Dec 29, 2019</div>
<div class="b" style="left:0px;top:545.5px;width:1287.8px;height:1px;background:#e6e6e6"></div>
<div class="b" style="left:15.9px;top:509.45px;width:17.6px;height:17.6px;border:1px solid #dddddd;border-radius:4px;background:#fff;box-shadow:0 1px 2px rgba(0,0,0,0.06)"></div>
<div class="t dark" style="left:50.47px;top:508.93px;font-size:14.42px;line-height:20px;letter-spacing:0.586px;">1050088</div>
<div class="b" style="left:119.8px;top:506.4px;width:24px;height:24px;background:#f4f4f5;border-radius:6px"></div>
<svg class="ic" style="left:123.8px;top:510.4px;width:16px;height:16px;" viewBox="0 0 24 24" fill="none" stroke="#6b6b6b" stroke-width="2" stroke-linecap="round" stroke-linejoin="round"><path d="M18 21a8 8 0 0 0-16 0"/><circle cx="10" cy="8" r="5"/><path d="M22 20c0-3.37-2-6.5-4-8a5 5 0 0 0-.45-8.3"/></svg>
<div class="b" style="left:151.8px;top:506.4px;width:24px;height:24px;background:#fef7ea;border-radius:6px"></div>
<svg class="ic" style="left:155.8px;top:510.4px;width:16px;height:16px;" viewBox="0 0 24 24" fill="none" stroke="#d89b2c" stroke-width="2" stroke-linecap="round" stroke-linejoin="round"><circle cx="12" cy="12" r="10"/><path d="M12 6v6l4 2"/></svg>
<div class="t dark" style="left:230.78px;top:508.93px;font-size:14.42px;line-height:20px;letter-spacing:0.207px;">Green, Daugherty and...</div>
<div class="t dark" style="left:427.08px;top:508.93px;font-size:14.42px;line-height:20px;letter-spacing:0.048px;">Small Rubber Gloves</div>
<div class="t dark" style="left:625.39px;top:508.93px;font-size:14.42px;line-height:20px;letter-spacing:0.339px;">Tess Timekeeper</div>
<div class="t dark" style="left:774.07px;top:508.93px;font-size:14.42px;line-height:20px;letter-spacing:0.159px;">Ready to Submit</div>
<div class="t dark" style="left:935.29px;top:508.93px;font-size:14.42px;line-height:20px;letter-spacing:0.194px;">$4,897.00</div>
<div class="t dark" style="left:1044.77px;top:508.93px;font-size:14.42px;line-height:20px;letter-spacing:-0.013px;">Dec 19, 2019</div>
<div class="b" style="left:0px;top:601.5px;width:1287.8px;height:1px;background:#e6e6e6"></div>
<div class="b" style="left:15.9px;top:565.45px;width:17.6px;height:17.6px;border:1px solid #dddddd;border-radius:4px;background:#fff;box-shadow:0 1px 2px rgba(0,0,0,0.06)"></div>
<div class="t dark" style="left:50.47px;top:564.93px;font-size:14.42px;line-height:20px;letter-spacing:0.603px;">1049865</div>
<div class="b" style="left:118.5px;top:562.4px;width:24px;height:24px;background:#f4f4f5;border-radius:6px"></div>
<svg class="ic" style="left:122.5px;top:566.4px;width:16px;height:16px;" viewBox="0 0 24 24" fill="none" stroke="#6b6b6b" stroke-width="2" stroke-linecap="round" stroke-linejoin="round"><path d="M18 21a8 8 0 0 0-16 0"/><circle cx="10" cy="8" r="5"/><path d="M22 20c0-3.37-2-6.5-4-8a5 5 0 0 0-.45-8.3"/></svg>
<div class="b" style="left:150.5px;top:562.4px;width:24px;height:24px;background:#fef7ea;border-radius:6px"></div>
<svg class="ic" style="left:154.5px;top:566.4px;width:16px;height:16px;" viewBox="0 0 24 24" fill="none" stroke="#d89b2c" stroke-width="2" stroke-linecap="round" stroke-linejoin="round"><circle cx="12" cy="12" r="10"/><path d="M12 6v6l4 2"/></svg>
<div class="t dark" style="left:230.77px;top:564.93px;font-size:14.42px;line-height:20px;letter-spacing:0.225px;">Nienow and Sons</div>
<div class="t dark" style="left:426.97px;top:564.93px;font-size:14.42px;line-height:20px;letter-spacing:0.244px;">Licensed Soft Car</div>
<div class="t dark" style="left:625.39px;top:564.93px;font-size:14.42px;line-height:20px;letter-spacing:0.339px;">Tess Timekeeper</div>
<div class="t dark" style="left:774.07px;top:564.93px;font-size:14.42px;line-height:20px;letter-spacing:0.159px;">Ready to Submit</div>
<div class="t dark" style="left:935.29px;top:564.93px;font-size:14.42px;line-height:20px;letter-spacing:0.531px;">$9,240.00</div>
<div class="t dark" style="left:1044.77px;top:564.93px;font-size:14.42px;line-height:20px;letter-spacing:0.014px;">Nov 18, 2019</div>
<div class="b" style="left:1090.8px;top:0px;width:18px;height:900px;background:linear-gradient(to right,rgba(0,0,0,0),rgba(0,0,0,0.045))"></div>
<div class="b" style="left:1108.8px;top:0px;width:179px;height:42px;background:#fafafa;border-left:1px solid #e3e3e3"></div>
<div class="b" style="left:1108.8px;top:0px;width:1px;height:900px;background:#e3e3e3"></div>
<div class="t gray hd med" style="left:1126.8px;top:10.73px;font-size:14.42px;line-height:20px;letter-spacing:0.606px;">Actions</div>
<div class="bdg" style="left:1180.8px;top:12.5px;width:18px;height:16px;font-size:12px;line-height:16px">5</div>
<div class="b" style="left:1108.8px;top:41.5px;width:180px;height:1px;background:#e3e3e3"></div>
<div class="b" style="left:1109.8px;top:42.5px;width:178px;height:55px;background:#fff"></div>
<div class="b" style="left:1108.8px;top:97.5px;width:180px;height:1px;background:#e6e6e6"></div>
<div class="b" style="left:1126.3px;top:54.7px;width:91px;height:31.5px;border:1px solid #dedede;border-radius:8px;background:#fff;box-shadow:0 1px 2px rgba(0,0,0,0.05)"></div>
<svg class="ic" style="left:1135.7px;top:62.7px;width:16px;height:16px;" viewBox="0 0 24 24" fill="none" stroke="#6b6b6b" stroke-width="2" stroke-linecap="round" stroke-linejoin="round"><path d="M14.536 21.686a.5.5 0 0 0 .937-.024l6.5-19a.496.496 0 0 0-.635-.635l-19 6.5a.5.5 0 0 0-.024.937l7.93 3.18a2 2 0 0 1 1.112 1.11z"/><path d="m21.854 2.147-10.94 10.939"/></svg>
<div class="t dark med" style="left:1159.78px;top:60.73px;font-size:14.42px;line-height:20px;letter-spacing:0.503px;">Submit</div>
<div class="b" style="left:1255.4px;top:68.9px;width:2.6px;height:2.6px;background:#6b6b6b;border-radius:50%"></div>
<div class="b" style="left:1260.1px;top:68.9px;width:2.6px;height:2.6px;background:#6b6b6b;border-radius:50%"></div>
<div class="b" style="left:1264.8px;top:68.9px;width:2.6px;height:2.6px;background:#6b6b6b;border-radius:50%"></div>
<div class="b" style="left:1109.8px;top:98.5px;width:178px;height:55px;background:#fbeeee"></div>
<div class="b" style="left:1108.8px;top:153.5px;width:180px;height:1px;background:#e6e6e6"></div>
<div class="b" style="left:1125.8px;top:114.2px;width:80px;height:24px;background:#f5d6d8;border-radius:8px"></div>
<div class="t red med" style="left:1134.08px;top:116.73px;font-size:14.42px;line-height:20px;letter-spacing:0.628px;">3 Actions</div>
<div class="b" style="left:1255.4px;top:124.9px;width:2.6px;height:2.6px;background:#6b6b6b;border-radius:50%"></div>
<div class="b" style="left:1260.1px;top:124.9px;width:2.6px;height:2.6px;background:#6b6b6b;border-radius:50%"></div>
<div class="b" style="left:1264.8px;top:124.9px;width:2.6px;height:2.6px;background:#6b6b6b;border-radius:50%"></div>
<div class="b" style="left:1109.8px;top:154.5px;width:178px;height:55px;background:#fff"></div>
<div class="b" style="left:1108.8px;top:209.5px;width:180px;height:1px;background:#e6e6e6"></div>
<div class="b" style="left:1126.3px;top:166.7px;width:91px;height:31.5px;border:1px solid #dedede;border-radius:8px;background:#fff;box-shadow:0 1px 2px rgba(0,0,0,0.05)"></div>
<svg class="ic" style="left:1135.7px;top:174.7px;width:16px;height:16px;" viewBox="0 0 24 24" fill="none" stroke="#6b6b6b" stroke-width="2" stroke-linecap="round" stroke-linejoin="round"><path d="M14.536 21.686a.5.5 0 0 0 .937-.024l6.5-19a.496.496 0 0 0-.635-.635l-19 6.5a.5.5 0 0 0-.024.937l7.93 3.18a2 2 0 0 1 1.112 1.11z"/><path d="m21.854 2.147-10.94 10.939"/></svg>
<div class="t dark med" style="left:1159.78px;top:172.73px;font-size:14.42px;line-height:20px;letter-spacing:0.503px;">Submit</div>
<div class="b" style="left:1255.4px;top:180.9px;width:2.6px;height:2.6px;background:#6b6b6b;border-radius:50%"></div>
<div class="b" style="left:1260.1px;top:180.9px;width:2.6px;height:2.6px;background:#6b6b6b;border-radius:50%"></div>
<div class="b" style="left:1264.8px;top:180.9px;width:2.6px;height:2.6px;background:#6b6b6b;border-radius:50%"></div>
<div class="b" style="left:1109.8px;top:210.5px;width:178px;height:55px;background:#fff"></div>
<div class="b" style="left:1108.8px;top:265.5px;width:180px;height:1px;background:#e6e6e6"></div>
<div class="b" style="left:1126.3px;top:222.7px;width:91px;height:31.5px;border:1px solid #dedede;border-radius:8px;background:#fff;box-shadow:0 1px 2px rgba(0,0,0,0.05)"></div>
<svg class="ic" style="left:1135.7px;top:230.7px;width:16px;height:16px;" viewBox="0 0 24 24" fill="none" stroke="#6b6b6b" stroke-width="2" stroke-linecap="round" stroke-linejoin="round"><path d="M14.536 21.686a.5.5 0 0 0 .937-.024l6.5-19a.496.496 0 0 0-.635-.635l-19 6.5a.5.5 0 0 0-.024.937l7.93 3.18a2 2 0 0 1 1.112 1.11z"/><path d="m21.854 2.147-10.94 10.939"/></svg>
<div class="t dark med" style="left:1159.78px;top:228.73px;font-size:14.42px;line-height:20px;letter-spacing:0.503px;">Submit</div>
<div class="b" style="left:1255.4px;top:236.9px;width:2.6px;height:2.6px;background:#6b6b6b;border-radius:50%"></div>
<div class="b" style="left:1260.1px;top:236.9px;width:2.6px;height:2.6px;background:#6b6b6b;border-radius:50%"></div>
<div class="b" style="left:1264.8px;top:236.9px;width:2.6px;height:2.6px;background:#6b6b6b;border-radius:50%"></div>
<div class="b" style="left:1109.8px;top:266.5px;width:178px;height:55px;background:#fff"></div>
<div class="b" style="left:1108.8px;top:321.5px;width:180px;height:1px;background:#e6e6e6"></div>
<div class="b" style="left:1126.3px;top:278.7px;width:91px;height:31.5px;border:1px solid #dedede;border-radius:8px;background:#fff;box-shadow:0 1px 2px rgba(0,0,0,0.05)"></div>
<svg class="ic" style="left:1135.7px;top:286.7px;width:16px;height:16px;" viewBox="0 0 24 24" fill="none" stroke="#6b6b6b" stroke-width="2" stroke-linecap="round" stroke-linejoin="round"><path d="M14.536 21.686a.5.5 0 0 0 .937-.024l6.5-19a.496.496 0 0 0-.635-.635l-19 6.5a.5.5 0 0 0-.024.937l7.93 3.18a2 2 0 0 1 1.112 1.11z"/><path d="m21.854 2.147-10.94 10.939"/></svg>
<div class="t dark med" style="left:1159.78px;top:284.73px;font-size:14.42px;line-height:20px;letter-spacing:0.503px;">Submit</div>
<div class="b" style="left:1255.4px;top:292.9px;width:2.6px;height:2.6px;background:#6b6b6b;border-radius:50%"></div>
<div class="b" style="left:1260.1px;top:292.9px;width:2.6px;height:2.6px;background:#6b6b6b;border-radius:50%"></div>
<div class="b" style="left:1264.8px;top:292.9px;width:2.6px;height:2.6px;background:#6b6b6b;border-radius:50%"></div>
<div class="b" style="left:1109.8px;top:322.5px;width:178px;height:55px;background:#fbeeee"></div>
<div class="b" style="left:1108.8px;top:377.5px;width:180px;height:1px;background:#e6e6e6"></div>
<div class="b" style="left:1125.8px;top:338.2px;width:80px;height:24px;background:#f5d6d8;border-radius:8px"></div>
<div class="t red med" style="left:1133.88px;top:340.73px;font-size:14.42px;line-height:20px;letter-spacing:0.604px;">2 Actions</div>
<div class="b" style="left:1255.4px;top:348.9px;width:2.6px;height:2.6px;background:#6b6b6b;border-radius:50%"></div>
<div class="b" style="left:1260.1px;top:348.9px;width:2.6px;height:2.6px;background:#6b6b6b;border-radius:50%"></div>
<div class="b" style="left:1264.8px;top:348.9px;width:2.6px;height:2.6px;background:#6b6b6b;border-radius:50%"></div>
<div class="b" style="left:1109.8px;top:378.5px;width:178px;height:55px;background:#fff"></div>
<div class="b" style="left:1108.8px;top:433.5px;width:180px;height:1px;background:#e6e6e6"></div>
<div class="b" style="left:1126.3px;top:390.7px;width:91px;height:31.5px;border:1px solid #dedede;border-radius:8px;background:#fff;box-shadow:0 1px 2px rgba(0,0,0,0.05)"></div>
<svg class="ic" style="left:1135.7px;top:398.7px;width:16px;height:16px;" viewBox="0 0 24 24" fill="none" stroke="#6b6b6b" stroke-width="2" stroke-linecap="round" stroke-linejoin="round"><path d="M14.536 21.686a.5.5 0 0 0 .937-.024l6.5-19a.496.496 0 0 0-.635-.635l-19 6.5a.5.5 0 0 0-.024.937l7.93 3.18a2 2 0 0 1 1.112 1.11z"/><path d="m21.854 2.147-10.94 10.939"/></svg>
<div class="t dark med" style="left:1159.78px;top:396.73px;font-size:14.42px;line-height:20px;letter-spacing:0.503px;">Submit</div>
<div class="b" style="left:1255.4px;top:404.9px;width:2.6px;height:2.6px;background:#6b6b6b;border-radius:50%"></div>
<div class="b" style="left:1260.1px;top:404.9px;width:2.6px;height:2.6px;background:#6b6b6b;border-radius:50%"></div>
<div class="b" style="left:1264.8px;top:404.9px;width:2.6px;height:2.6px;background:#6b6b6b;border-radius:50%"></div>
<div class="b" style="left:1109.8px;top:434.5px;width:178px;height:55px;background:#fff"></div>
<div class="b" style="left:1108.8px;top:489.5px;width:180px;height:1px;background:#e6e6e6"></div>
<div class="b" style="left:1126.3px;top:446.7px;width:91px;height:31.5px;border:1px solid #dedede;border-radius:8px;background:#fff;box-shadow:0 1px 2px rgba(0,0,0,0.05)"></div>
<svg class="ic" style="left:1135.7px;top:454.7px;width:16px;height:16px;" viewBox="0 0 24 24" fill="none" stroke="#6b6b6b" stroke-width="2" stroke-linecap="round" stroke-linejoin="round"><path d="M14.536 21.686a.5.5 0 0 0 .937-.024l6.5-19a.496.496 0 0 0-.635-.635l-19 6.5a.5.5 0 0 0-.024.937l7.93 3.18a2 2 0 0 1 1.112 1.11z"/><path d="m21.854 2.147-10.94 10.939"/></svg>
<div class="t dark med" style="left:1159.78px;top:452.73px;font-size:14.42px;line-height:20px;letter-spacing:0.503px;">Submit</div>
<div class="b" style="left:1255.4px;top:460.9px;width:2.6px;height:2.6px;background:#6b6b6b;border-radius:50%"></div>
<div class="b" style="left:1260.1px;top:460.9px;width:2.6px;height:2.6px;background:#6b6b6b;border-radius:50%"></div>
<div class="b" style="left:1264.8px;top:460.9px;width:2.6px;height:2.6px;background:#6b6b6b;border-radius:50%"></div>
<div class="b" style="left:1109.8px;top:490.5px;width:178px;height:55px;background:#fff"></div>
<div class="b" style="left:1108.8px;top:545.5px;width:180px;height:1px;background:#e6e6e6"></div>
<div class="b" style="left:1126.3px;top:502.7px;width:91px;height:31.5px;border:1px solid #dedede;border-radius:8px;background:#fff;box-shadow:0 1px 2px rgba(0,0,0,0.05)"></div>
<svg class="ic" style="left:1135.7px;top:510.7px;width:16px;height:16px;" viewBox="0 0 24 24" fill="none" stroke="#6b6b6b" stroke-width="2" stroke-linecap="round" stroke-linejoin="round"><path d="M14.536 21.686a.5.5 0 0 0 .937-.024l6.5-19a.496.496 0 0 0-.635-.635l-19 6.5a.5.5 0 0 0-.024.937l7.93 3.18a2 2 0 0 1 1.112 1.11z"/><path d="m21.854 2.147-10.94 10.939"/></svg>
<div class="t dark med" style="left:1159.78px;top:508.73px;font-size:14.42px;line-height:20px;letter-spacing:0.503px;">Submit</div>
<div class="b" style="left:1255.4px;top:516.9px;width:2.6px;height:2.6px;background:#6b6b6b;border-radius:50%"></div>
<div class="b" style="left:1260.1px;top:516.9px;width:2.6px;height:2.6px;background:#6b6b6b;border-radius:50%"></div>
<div class="b" style="left:1264.8px;top:516.9px;width:2.6px;height:2.6px;background:#6b6b6b;border-radius:50%"></div>
<div class="b" style="left:1109.8px;top:546.5px;width:178px;height:55px;background:#fff"></div>
<div class="b" style="left:1108.8px;top:601.5px;width:180px;height:1px;background:#e6e6e6"></div>
<div class="b" style="left:1126.3px;top:558.7px;width:91px;height:31.5px;border:1px solid #dedede;border-radius:8px;background:#fff;box-shadow:0 1px 2px rgba(0,0,0,0.05)"></div>
<svg class="ic" style="left:1135.7px;top:566.7px;width:16px;height:16px;" viewBox="0 0 24 24" fill="none" stroke="#6b6b6b" stroke-width="2" stroke-linecap="round" stroke-linejoin="round"><path d="M14.536 21.686a.5.5 0 0 0 .937-.024l6.5-19a.496.496 0 0 0-.635-.635l-19 6.5a.5.5 0 0 0-.024.937l7.93 3.18a2 2 0 0 1 1.112 1.11z"/><path d="m21.854 2.147-10.94 10.939"/></svg>
<div class="t dark med" style="left:1159.78px;top:564.73px;font-size:14.42px;line-height:20px;letter-spacing:0.503px;">Submit</div>
<div class="b" style="left:1255.4px;top:572.9px;width:2.6px;height:2.6px;background:#6b6b6b;border-radius:50%"></div>
<div class="b" style="left:1260.1px;top:572.9px;width:2.6px;height:2.6px;background:#6b6b6b;border-radius:50%"></div>
<div class="b" style="left:1264.8px;top:572.9px;width:2.6px;height:2.6px;background:#6b6b6b;border-radius:50%"></div>
</div>
</div>
</div></body></html>
